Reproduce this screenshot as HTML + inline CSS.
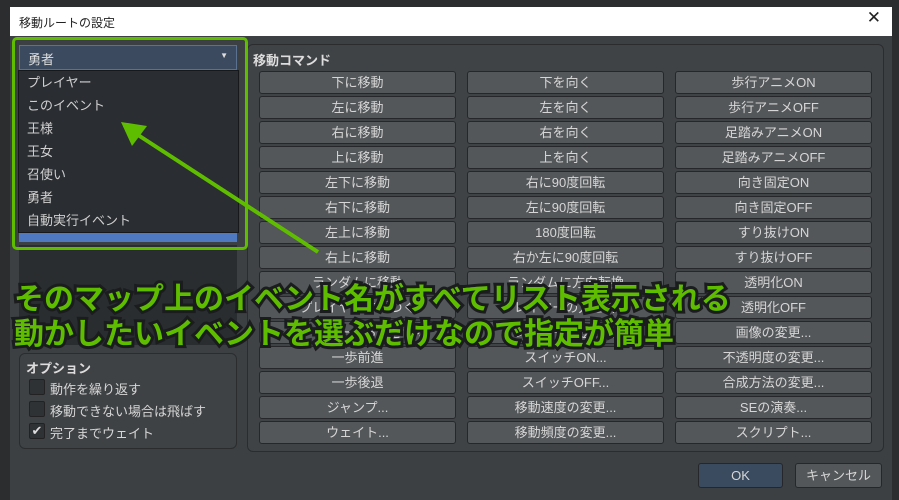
<!DOCTYPE html>
<html><head><meta charset="utf-8"><style>
*{box-sizing:border-box;margin:0;padding:0}
body{width:899px;height:500px;overflow:hidden;background:#2b2d2f;font-family:"Liberation Sans","Noto Sans CJK JP",sans-serif;position:relative}
.a{position:absolute}
.dlg{left:10px;top:7px;width:882px;height:493px;background:#3d4043}
.title{left:10px;top:7px;width:882px;height:29px;background:#fff;font-size:12px;color:#222;padding:7px 0 0 9px}
.x{right:18px;top:8px;font-size:17px;color:#222;font-weight:300}
.grp{left:247px;top:44px;width:637px;height:408px;border:1px solid #2a2c2e;border-radius:6px;background:#404346}
.gl{left:253px;top:50px;font-size:13px;font-weight:bold;color:#ddd}
.b{position:absolute;width:197px;height:23px;background:#54575a;border:1px solid #25272a;border-radius:3px;color:#d6d6d6;font-size:13px;text-align:center;line-height:21px}
.list{left:18px;top:70px;width:221px;height:163px;background:#2a2d31;border:1px solid #16181a}
.list div{height:23px;font-size:13px;color:#d0d0d0;padding-left:8px;line-height:23px}
.dd{left:19px;top:45px;width:218px;height:25px;background:#3b4a5e;border:1px solid #5a7290;color:#ddd;font-size:13px;padding:3px 0 0 8px}
.green{left:12px;top:37px;width:236px;height:213px;border:3px solid #5fbd00;border-radius:5px}
.opt{left:19px;top:353px;width:218px;height:96px;border:1px solid #2a2c2e;border-radius:6px;background:#3f4245}
.cb{position:absolute;left:9px;width:16px;height:16px;background:#2f3235;border:1px solid #222;border-radius:2px;color:#ddd;font-size:13px;line-height:14px;text-align:center}
.cl{position:absolute;left:30px;font-size:13px;color:#d6d6d6}
.big{position:absolute;font-size:30px;font-weight:bold;color:#5fbd00;-webkit-text-stroke:6px #1a1c1e;paint-order:stroke fill;letter-spacing:0;white-space:nowrap}
</style></head><body>
<div class="a dlg"></div>
<div class="a title">移動ルートの設定</div>
<div class="a x">✕</div>
<div class="a" style="left:19px;top:245px;width:218px;height:100px;background:#2a2d30"></div>
<div class="a grp"></div>
<div class="a gl">移動コマンド</div>
<div id="btns"></div>
<div class="a dd">勇者<span style="position:absolute;right:8px;top:5px;font-size:8px">▼</span></div>
<div class="a list"><div>プレイヤー</div><div>このイベント</div><div>王様</div><div>王女</div><div>召使い</div><div>勇者</div><div>自動実行イベント</div></div>
<div class="a" style="left:19px;top:233px;width:218px;height:9px;background:#4f79c0"></div>
<div class="a green"></div>
<div class="a opt">
<div style="position:absolute;left:6px;top:4px;font-size:13px;font-weight:bold;color:#ddd">オプション</div>
<div class="cb" style="top:25px"></div><div class="cl" style="top:25px">動作を繰り返す</div>
<div class="cb" style="top:47px"></div><div class="cl" style="top:47px">移動できない場合は飛ばす</div>
<div class="cb" style="top:69px">✔</div><div class="cl" style="top:69px">完了までウェイト</div>
</div>
<div class="b" style="left:698px;top:463px;width:85px;height:25px;background:#3a4a5f;line-height:23px">OK</div>
<div class="b" style="left:795px;top:463px;width:87px;height:25px;line-height:23px">キャンセル</div>
<svg class="a" style="left:0;top:0" width="899" height="500"><line x1="318" y1="252" x2="138" y2="135" stroke="#5fbd00" stroke-width="4"/><polygon points="121,122 147,126 132,146" fill="#5fbd00"/></svg>
<div class="big" style="left:14px;top:274px">そのマップ上のイベント名がすべてリスト表示される</div>
<div class="big" style="left:14px;top:309px">動かしたいイベントを選ぶだけなので指定が簡単</div>
<script>
var c=[["下に移動","左に移動","右に移動","上に移動","左下に移動","右下に移動","左上に移動","右上に移動","ランダムに移動","プレイヤーに近づく","プレイヤーから遠ざかる","一歩前進","一歩後退","ジャンプ...","ウェイト..."],
["下を向く","左を向く","右を向く","上を向く","右に90度回転","左に90度回転","180度回転","右か左に90度回転","ランダムに方向転換","プレイヤーの方を向く","プレイヤーの逆を向く","スイッチON...","スイッチOFF...","移動速度の変更...","移動頻度の変更..."],
["歩行アニメON","歩行アニメOFF","足踏みアニメON","足踏みアニメOFF","向き固定ON","向き固定OFF","すり抜けON","すり抜けOFF","透明化ON","透明化OFF","画像の変更...","不透明度の変更...","合成方法の変更...","SEの演奏...","スクリプト..."]];
var h="";for(var i=0;i<3;i++)for(var j=0;j<15;j++)h+='<div class="b" style="left:'+(259+i*208)+'px;top:'+(71+j*25)+'px">'+c[i][j]+'</div>';
document.getElementById("btns").innerHTML=h;
</script>
</body></html>
